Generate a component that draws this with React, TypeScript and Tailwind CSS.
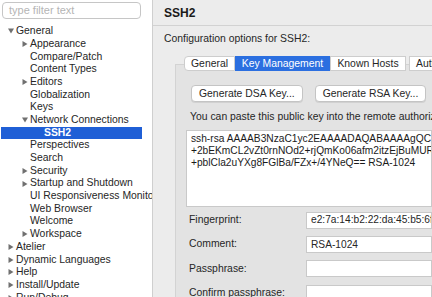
import { ReactNode } from 'react'

type Node = { label: string; depth: number; arrow?: 'open' | 'closed'; selected?: boolean }

const tree: Node[] = [
  { label: 'General', depth: 0, arrow: 'open' },
  { label: 'Appearance', depth: 1, arrow: 'closed' },
  { label: 'Compare/Patch', depth: 1 },
  { label: 'Content Types', depth: 1 },
  { label: 'Editors', depth: 1, arrow: 'closed' },
  { label: 'Globalization', depth: 1 },
  { label: 'Keys', depth: 1 },
  { label: 'Network Connections', depth: 1, arrow: 'open' },
  { label: 'SSH2', depth: 2, selected: true },
  { label: 'Perspectives', depth: 1 },
  { label: 'Search', depth: 1 },
  { label: 'Security', depth: 1, arrow: 'closed' },
  { label: 'Startup and Shutdown', depth: 1, arrow: 'closed' },
  { label: 'UI Responsiveness Monitoring', depth: 1 },
  { label: 'Web Browser', depth: 1 },
  { label: 'Welcome', depth: 1 },
  { label: 'Workspace', depth: 1, arrow: 'closed' },
  { label: 'Atelier', depth: 0, arrow: 'closed' },
  { label: 'Dynamic Languages', depth: 0, arrow: 'closed' },
  { label: 'Help', depth: 0, arrow: 'closed' },
  { label: 'Install/Update', depth: 0, arrow: 'closed' },
  { label: 'Run/Debug', depth: 0, arrow: 'closed' },
]

const pads = ['pl-[8px]', 'pl-[22px]', 'pl-[35px]']

function Arrow({ open }: { open: boolean }) {
  return (
    <svg width="6" height="6" viewBox="0 0 6 6" className="mr-[2px] shrink-0">
      {open ? <path d="M0 0.5 L6 0.5 L3 5.5 Z" fill="#707070" /> : <path d="M0.5 0 L5.5 3 L0.5 6 Z" fill="#707070" />}
    </svg>
  )
}

function Field({ label, value }: { label: string; value?: string }) {
  return (
    <div className="flex h-[17px] items-center">
      <span className="w-[120px] shrink-0 pl-[3px] text-[#262626]">{label}</span>
      <div className="flex h-[17px] flex-1 items-center overflow-hidden whitespace-nowrap border border-[#c9c9c9] bg-white pl-[4px] text-[10.2px] text-[#262626]">
        {value}
      </div>
    </div>
  )
}

function Button({ children }: { children: ReactNode }) {
  return (
    <div className="flex h-[17px] items-center rounded-[4px] border border-[#c4c4c4] bg-white px-[7px] text-[#262626] shadow-[0_1px_0_rgba(0,0,0,0.08)]">
      {children}
    </div>
  )
}

export default function App() {
  return (
    <div className="flex h-[297px] w-[432px] overflow-hidden bg-[#ececec] font-['Liberation_Sans',Arial,sans-serif] text-[10.4px] leading-none">
      {/* preference tree */}
      <div className="flex w-[153px] shrink-0 flex-col overflow-hidden border-r border-[#cfcfcf] bg-white">
        <div className="mx-[2px] mt-[2px] flex h-[17px] w-[139px] shrink-0 items-center rounded-[4px] border border-[#c6c6c6] pl-[6px] text-[11px] text-[#b5b5b5]">
          type filter text
        </div>
        <div className="mt-[6px] flex flex-col">
          {tree.map((n) => (
            <div
              key={n.label}
              className={`flex h-[12.7px] shrink-0 items-center whitespace-nowrap ${pads[n.depth]} ${
                n.selected ? 'ml-[1px] mr-[10px] bg-[#1f5fd6] font-bold text-white' : 'text-[#262626]'
              }`}
            >
              {n.arrow ? <Arrow open={n.arrow === 'open'} /> : <span className="w-[8px] shrink-0" />}
              {n.label}
            </div>
          ))}
        </div>
      </div>

      {/* settings page */}
      <div className="flex min-w-0 flex-1 flex-col overflow-hidden">
        <div className="flex h-[26px] shrink-0 items-center border-b border-[#d2d2d2] pl-[11px] text-[12px] font-bold text-[#1a1a1a]">
          SSH2
        </div>
        <div className="pl-[11px] pt-[8px] text-[#262626]">Configuration options for SSH2:</div>

        <div className="ml-[22px] mt-[12px] flex min-w-0 flex-col">
          <div className="relative z-10 -mb-[7px] ml-[9px] flex h-[15px] whitespace-nowrap">
            <div className="flex w-[51px] shrink-0 items-center justify-center rounded-l-[4px] border border-[#cdcdcd] bg-white text-[#262626]">General</div>
            <div className="flex w-[95px] shrink-0 items-center justify-center bg-[#2b6fe0] text-white">Key Management</div>
            <div className="flex w-[76px] shrink-0 items-center justify-center border border-[#cdcdcd] bg-white text-[#262626]">Known Hosts</div>
            <div className="ml-[3px] flex shrink-0 items-center border border-[#cdcdcd] bg-white px-[6px] text-[#262626]">Authentication</div>
          </div>
          <div className="flex flex-col border-l border-t border-[#d3d3d3] bg-[#e3e3e3] pl-[10px] pt-[20px] text-[#262626]">
            <div className="flex gap-[12px] whitespace-nowrap pl-[5px]">
              <Button>Generate DSA Key...</Button>
              <Button>Generate RSA Key...</Button>
            </div>
            <div className="mt-[10px] whitespace-nowrap pl-[4px]">You can paste this public key into the remote authorized_keys file:</div>
            <div className="mt-[7px] h-[77px] overflow-hidden whitespace-nowrap border border-[#c9c9c9] bg-white pl-[4px] pt-[2px] text-[10.2px] leading-[12px] text-[#1a1a1a]">
              <div>ssh-rsa AAAAB3NzaC1yc2EAAAADAQABAAAAgQChy...</div>
              <div>+2bEKmCL2vZt0rnNOd2+rjQmKo06afm2itzEjBuMUR4</div>
              <div>+pblCla2uYXg8FGlBa/FZx+/4YNeQ== RSA-1024</div>
            </div>
            <div className="mt-[5px] flex flex-col gap-[7.3px]">
              <Field label="Fingerprint:" value="e2:7a:14:b2:22:da:45:b5:6f:01" />
              <Field label="Comment:" value="RSA-1024" />
              <Field label="Passphrase:" />
              <Field label="Confirm passphrase:" />
            </div>
          </div>
        </div>
      </div>
    </div>
  )
}
